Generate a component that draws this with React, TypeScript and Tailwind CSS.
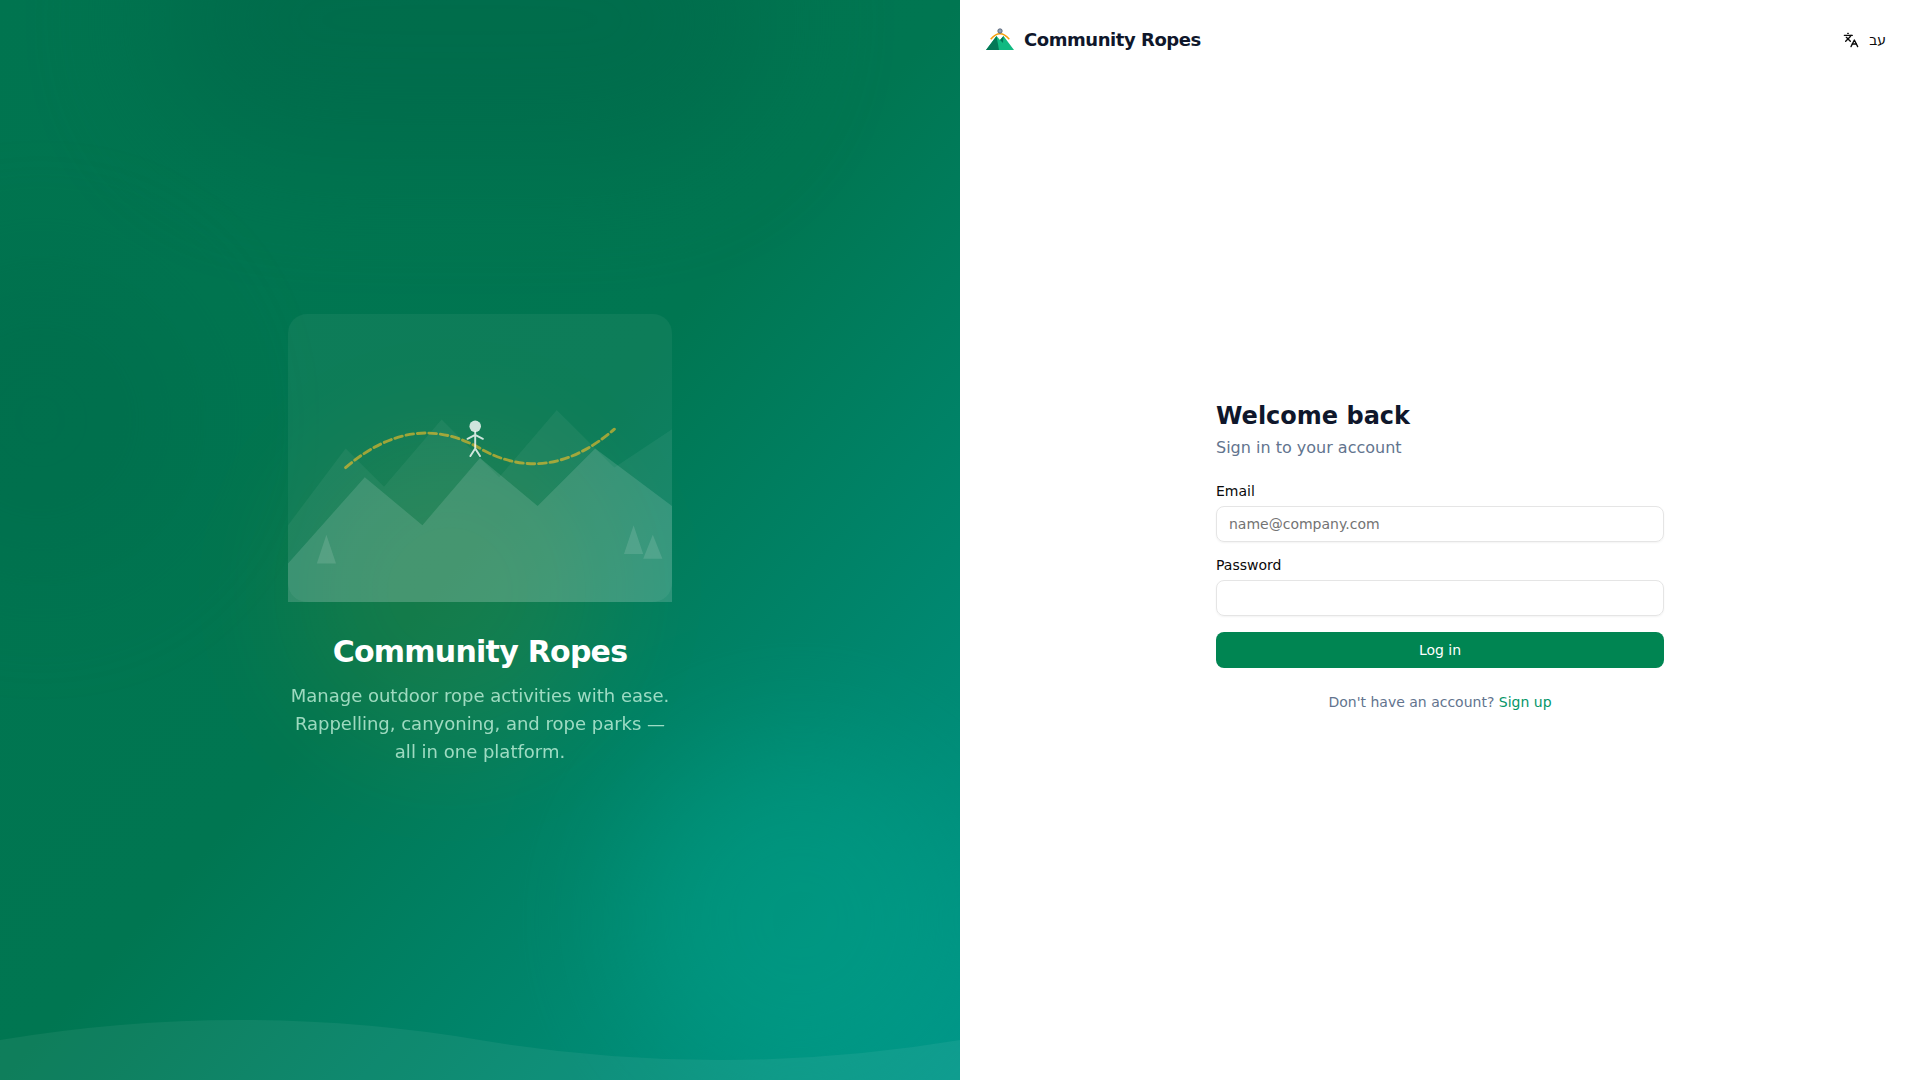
import { Languages } from "lucide-react";

function Illustration() {
  return (
    <svg viewBox="0 0 400 300" className="w-full h-full" fill="none">
      <rect width="400" height="300" rx="20" fill="white" fillOpacity="0.05" />
      <path d="M0 220 L60 140 L100 180 L160 110 L220 170 L280 100 L340 160 L400 120 V300 H0 Z" fill="white" fillOpacity="0.05" />
      <path d="M0 260 L80 170 L140 220 L200 150 L260 200 L320 140 L400 200 V300 H0 Z" fill="white" fillOpacity="0.13" />
      <path d="M60 160 Q130 100 200 140 T340 120" stroke="#fbbf24" strokeOpacity="0.6" strokeWidth="3" strokeDasharray="8 4" strokeLinecap="round" />
      <circle cx="195" cy="117" r="6" fill="white" fillOpacity="0.8" />
      <path d="M195 123 V140 M187 130 L195 126 L203 130 M195 140 L190 148 M195 140 L200 148" stroke="white" strokeOpacity="0.8" strokeWidth="2" strokeLinecap="round" strokeLinejoin="round" />
      <polygon points="40,230 50,260 30,260" fill="white" fillOpacity="0.12" />
      <polygon points="360,220 370,250 350,250" fill="white" fillOpacity="0.12" />
      <polygon points="380,230 390,255 370,255" fill="white" fillOpacity="0.12" />
    </svg>
  );
}

function Logo() {
  return (
    <svg viewBox="0 0 28 24" className="w-7 h-6" fill="none">
      <path d="M0 22 L10.5 8 L14 12 L17.5 8 L28 22 Z" fill="#10b981" />
      <path d="M0 22 L10.5 8 L13 22 Z" fill="#047857" />
      <path d="M14 12 L17.5 8 L17 15 Z" fill="#047857" />
      <path d="M4.7 11.3 Q14 0 23.3 11.3" stroke="#f59e0b" strokeWidth="1.5" />
      <circle cx="14" cy="3" r="2.2" fill="#94a3b8" stroke="#475569" strokeWidth="0.8" />
    </svg>
  );
}

export default function App() {
  return (
    <div className="flex min-h-screen font-['DejaVu_Sans',sans-serif]">
      {/* Left hero */}
      <div className="relative w-1/2 flex items-center justify-center overflow-hidden bg-gradient-to-br from-[#00744f] via-[#007651] to-[#009689]">
        <div className="absolute left-[150px] top-[-120px] w-[620px] h-[280px] rounded-full bg-[#006045] opacity-40 blur-3xl" />
        <div className="absolute left-[-120px] top-[260px] w-[320px] h-[320px] rounded-full bg-[#006045] opacity-25 blur-3xl" />
        <div className="absolute left-[290px] top-[430px] w-[320px] h-[320px] rounded-full bg-[#ffb900] opacity-[0.08] blur-3xl" />
        <div className="absolute left-[620px] top-[740px] w-[360px] h-[360px] rounded-full bg-[#00a38c] opacity-45 blur-3xl" />
        <div className="relative w-[384px] flex flex-col items-center text-center">
          <div className="w-[384px] h-[288px]">
            <Illustration />
          </div>
          <h1 className="mt-8 text-[30px] leading-9 font-bold tracking-tight text-white">Community Ropes</h1>
          <p className="mt-3 text-lg leading-7 text-[#d0fae5] opacity-75">
            Manage outdoor rope activities with ease. Rappelling, canyoning, and rope parks — all in one platform.
          </p>
        </div>
        <svg viewBox="0 0 1440 120" className="absolute bottom-0 left-0 w-full h-20" preserveAspectRatio="none">
          <path d="M0 60 Q360 0 720 60 T1440 60 V120 H0 Z" fill="white" fillOpacity="0.06" />
        </svg>
      </div>

      {/* Right form */}
      <div className="relative w-1/2 flex flex-col bg-white">
        <header className="flex items-center justify-between pl-[26px] pr-[34px] h-20">
          <div className="flex items-center gap-2.5">
            <Logo />
            <span className="text-lg font-bold tracking-tight text-[#0f172b]">Community Ropes</span>
          </div>
          <button className="flex items-center gap-2.5 text-sm text-[#0a0a0a]">
            <Languages className="w-4 h-4" />
            <span>עב</span>
          </button>
        </header>
        <div className="flex-1 flex items-center justify-center pb-[49px]">
          <div className="w-[448px]">
            <h2 className="text-2xl font-bold text-[#0f172b]">Welcome back</h2>
            <p className="mt-1 text-base text-[#62748e]">Sign in to your account</p>
            <form className="mt-[21px] flex flex-col">
              <label className="text-sm text-[#0a0a0a]">Email</label>
              <input
                type="email"
                placeholder="name@company.com"
                className="mt-[5px] h-9 px-3 text-sm rounded-lg border border-[#e5e5e5] shadow-xs outline-none placeholder:text-[#737373]"
              />
              <label className="mt-[13px] text-sm text-[#0a0a0a]">Password</label>
              <input
                type="password"
                className="mt-[5px] h-9 px-3 text-sm rounded-lg border border-[#e5e5e5] shadow-xs outline-none"
              />
              <button type="button" className="mt-4 h-9 rounded-lg bg-[#008552] text-sm font-medium text-white">
                Log in
              </button>
            </form>
            <p className="mt-6 text-center text-sm text-[#62748e]">
              Don't have an account? <a className="text-[#059669]">Sign up</a>
            </p>
          </div>
        </div>
      </div>
    </div>
  );
}
